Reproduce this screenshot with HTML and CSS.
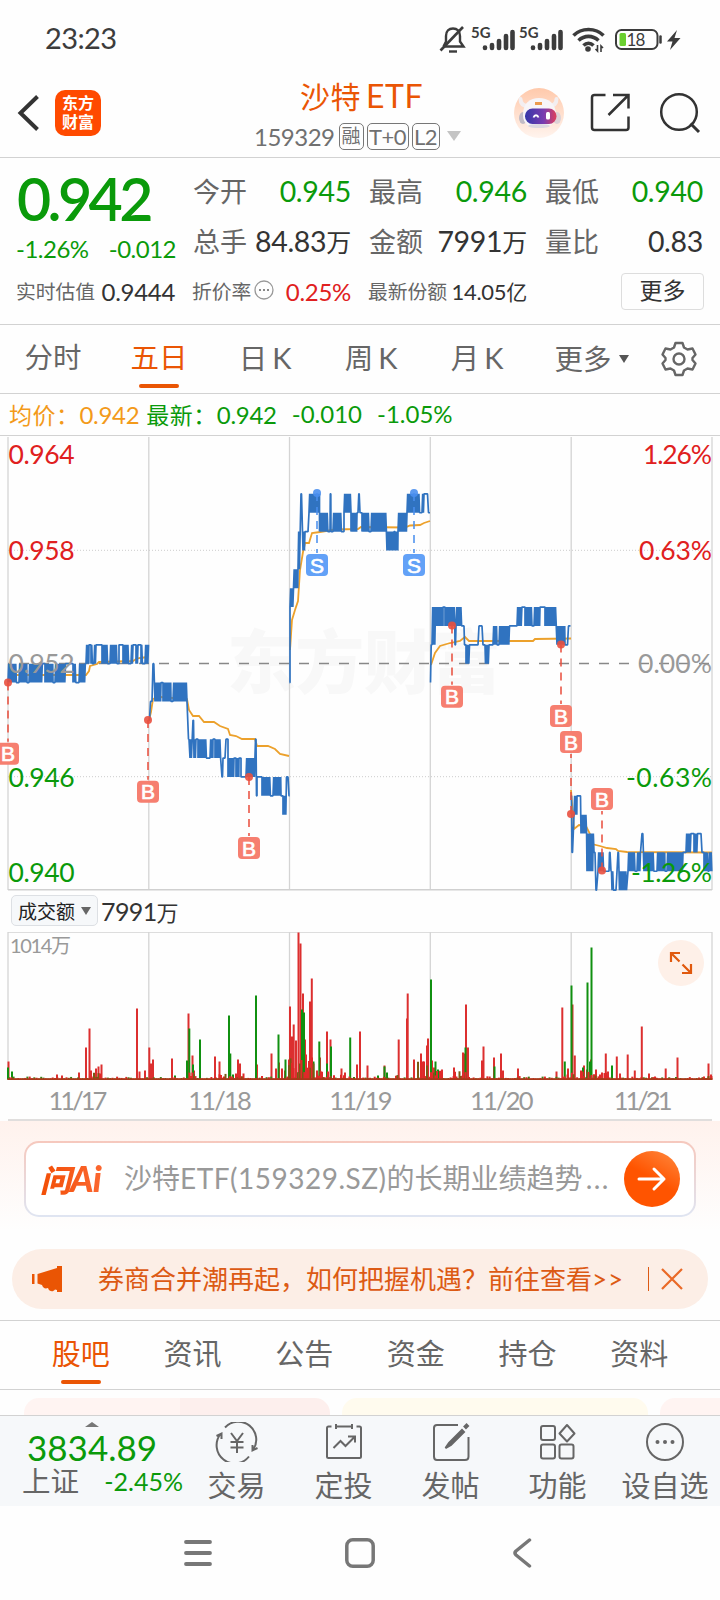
FILE: index.html
```html
<!DOCTYPE html>
<html lang="zh-CN">
  <head>
    <meta charset="UTF-8" />
    <meta name="viewport" content="width=device-width, initial-scale=1.0" />
    <title>沙特ETF 159329</title>
    <link rel="stylesheet" href="styles.css">
  </head>
  <body>
    <div class="status-bar">
      <span class="clock">23:23</span>
      <svg class="status-icons" width="244" height="32" viewBox="438 22 244 32">
        <g fill="none" stroke="#3c3c3c" stroke-width="2.4">
          <path d="M445 45.5h18.5l-3.5-5v-5.500c0-5-3-7.500-7-7.500s-7 2.500-7 7.500v5.500l-2.500 5" />
          <path d="M463 26 440.500 49.500" stroke-width="2.600" />
          <path d="M449 50.500h8" />
        </g>
        <g class="net">
          <text x="471" y="37" textLength="19.500" lengthAdjust="spacingAndGlyphs">5G</text>
          <text x="519" y="37" textLength="19.500" lengthAdjust="spacingAndGlyphs">5G</text>
        </g>
        <g stroke="#3c3c3c" stroke-width="4.600" stroke-linecap="round">
          <path d="M485 47v-.5M492 47v-3M499 47v-7M506 47v-12M512.500 47v-16" />
          <path d="M533 47v-.5M540 47v-3M547 47v-7M554 47v-12M560.500 47v-16" />
        </g>
        <g fill="none" stroke="#3c3c3c" stroke-width="3.600">
          <path d="M573.500 34.500c8-8 22-8 30 0M578.500 39.500c6-5.500 14-5.500 20 0M583.500 44.500c3-3 7-3 10 0" />
        </g>
        <circle cx="588" cy="48" r="2.800" fill="#3c3c3c" />
        <path d="M597.500 44v6l-2-2M601 51v-6l2 2" stroke="#3c3c3c" stroke-width="1.600" fill="none" />
        <rect x="616" y="29" width="41.500" height="19" rx="5.500" fill="none" stroke="#3c3c3c" stroke-width="2" />
        <rect x="619.500" y="32" width="6.500" height="13" rx="1.500" fill="#6bcf2f" />
        <text class="battery" x="626.500" y="45">18</text>
        <path d="M660.500 35.500v6" stroke="#3c3c3c" stroke-width="2.500" stroke-linecap="round" />
        <path d="M677 29 667 40.500h5.500l-2.500 8.500 10.500-12h-6z" fill="#3c3c3c" />
      </svg>
    </div>

    <div class="header">
      <svg class="back" width="24" height="38" viewBox="0 0 24 38">
        <path d="M21.500 2.500 4.500 19l17 16.500" fill="none" stroke="#333" stroke-width="4" />
      </svg>
      <div class="app-logo">东方<br>财富</div>
      <div class="title-box">
        <div class="title"><span class="title-cn">沙特</span>ETF</div>
        <div class="subtitle">
          <span class="code">159329</span>
          <span class="tag tag-cn">融</span>
          <span class="tag tag-t0">T+0</span>
          <span class="tag tag-l2">L2</span>
          <i class="caret"></i>
        </div>
      </div>
      <div class="header-icons">
        <svg class="robot" width="50" height="50" viewBox="0 0 50 50">
          <defs>
            <linearGradient id="robotBg" x1="0" y1="0" x2="0" y2="1">
              <stop offset="0" stop-color="#ffc9ab" />
              <stop offset="1" stop-color="#fff4ee" />
            </linearGradient>
            <linearGradient id="visor">
              <stop offset="0" stop-color="#3437a8" />
              <stop offset=".6" stop-color="#7a3cb0" />
              <stop offset="1" stop-color="#e0405a" />
            </linearGradient>
          </defs>
          <circle cx="25" cy="25" r="25" fill="url(#robotBg)" />
          <path d="M6.500 11c0 5 3 7 8 7M42.500 11c0 5-3 7-8 7" stroke="#f3eef0" stroke-width="4" fill="none" stroke-linecap="round" />
          <ellipse cx="9" cy="30" rx="4" ry="6" fill="#c2bcc6" />
          <ellipse cx="43" cy="30" rx="4" ry="6" fill="#ddd2d6" />
          <path d="M9 27C9 15 16 10 25 10s17 5 17 17c0 9-7 13-17 13S9 36 9 27z" fill="#f7f5f8" />
          <ellipse cx="25" cy="38" rx="11" ry="2" fill="#ddd8e0" />
          <path d="M21 15.500h7" stroke="#eb9b4f" stroke-width="3" />
          <rect x="11" y="20.500" width="31.500" height="15.500" rx="7.500" fill="url(#visor)" />
          <path d="M19.500 29.500c1-3 4-3 5 0" fill="none" stroke="#fff" stroke-width="1.800" />
          <rect x="32" y="24" width="4" height="7.500" rx="1.500" fill="#fff" />
        </svg>
        <svg width="40" height="40" viewBox="0 0 40 40" fill="none" stroke="#333" stroke-width="2.500">
          <path d="M15.500 2H4.500Q2 2 2 4.500v30Q2 37 4.500 37h31.500Q38.500 37 38.500 34.500V23.500M23 2h15.500v13.500M38 2.500 18.500 22" />
        </svg>
        <svg width="42" height="42" viewBox="0 0 42 42" fill="none" stroke="#333" stroke-width="2.500">
          <circle cx="20" cy="20" r="17.800" />
          <path d="m31.500 31.500 8.500 8.500" stroke-width="3" />
        </svg>
      </div>
    </div>

    <div class="quote">
      <div class="quote-main">
        <div class="last-price">0.942</div>
        <div class="change"><span>-1.26%</span><span>-0.012</span></div>
      </div>
      <div class="quote-grid">
        <div class="cell"><b>今开</b><span class="green">0.945</span></div>
        <div class="cell"><b>最高</b><span class="green">0.946</span></div>
        <div class="cell"><b>最低</b><span class="green">0.940</span></div>
        <div class="cell"><b>总手</b><span>84.83<em>万</em></span></div>
        <div class="cell"><b>金额</b><span>7991<em>万</em></span></div>
        <div class="cell"><b>量比</b><span>0.83</span></div>
      </div>
    </div>
    <div class="quote-extra">
      <div class="cell cell-first"><b>实时估值</b><span>0.9444</span></div>
      <div class="cell"><b class="with-dots">折价率<svg width="20" height="20" viewBox="0 0 20 20"><circle cx="10" cy="10" r="9" fill="none" stroke="#999" stroke-width="1.300" /><path d="M5 10h2M9 10h2M13 10h2" stroke="#888" stroke-width="2" /></svg></b><span class="red">0.25%</span></div>
      <div class="cell cell-share"><b>最新份额</b><span>14.05<em>亿</em></span></div>
      <div class="more-btn">更多</div>
    </div>

    <div class="period-tabs">
      <span>分时</span>
      <span class="active">五日</span>
      <span>日<i>K</i></span>
      <span>周<i>K</i></span>
      <span>月<i>K</i></span>
      <span class="tab-more">更多<u></u></span>
      <svg width="36" height="36" viewBox="0 0 36 36" fill="none" stroke="#666" stroke-width="2.400" stroke-linejoin="round">
        <path d="M14.500 2h7l1.500 4.500 3.500 2 5-1 3 6-3 3.500v2l3 3.500-3 6-5-1-3.500 2L21.500 34h-7L13 29.500l-3.500-2-5 1-3-6 3-3.500v-2l-3-3.500 3-6 5 1 3.500-2z" />
        <circle cx="18" cy="18" r="5.500" />
      </svg>
    </div>

    <div class="legend">
      <span class="avg"><b>均价：</b>0.942</span>
      <span class="latest"><b>最新：</b>0.942</span>
      <span class="diff">-0.010</span>
      <span class="pct">-1.05%</span>
    </div>

    <svg class="price-chart" id="price" width="720" height="456" viewBox="0 436 720 456"></svg>

    <div class="volume-head">
      <div class="volume-select">成交额<i></i></div>
      <span>7991<em>万</em></span>
    </div>

    <div class="volume-box">
      <svg class="volume-chart" id="volume" width="720" height="149" viewBox="0 932 720 149"></svg>
      <div class="expand">
        <svg width="24" height="24" viewBox="0 0 24 24" fill="none" stroke="#e0590e" stroke-width="2.200">
          <path d="M11 2H2v9M2 2l8.500 8.500M13 22h9v-9M22 22l-8.500-8.500" />
        </svg>
      </div>
    </div>
    <div class="dates">
      <span class="tight">11/17</span><span>11/18</span><span>11/19</span><span>11/20</span><span class="tight">11/21</span>
    </div>

    <div class="ai-section">
      <div class="ai-box">
        <span class="ai-logo">问<i>Ai</i></span>
        <span class="ai-text">沙特<i>ETF(159329.SZ)</i>的长期业绩趋势<i>...</i></span>
        <div class="ai-go">
          <svg width="30" height="26" viewBox="0 0 30 26" fill="none" stroke="#fff" stroke-width="3" stroke-linecap="round" stroke-linejoin="round">
            <path d="M2 13h25M17 3l10 10-10 10" />
          </svg>
        </div>
      </div>
    </div>

    <div class="notice">
      <svg width="31" height="26" viewBox="0 0 31 26" fill="#ea5504">
        <path d="M0 8h2.500v10H0zM5.500 8 25 2V0h5v26h-5v-2l-2-.500c-2 3-6 2-7-1.500-3 1-5 0-6-3l-4.500-1.500z" />
      </svg>
      <span class="notice-text">券商合并潮再起，如何把握机遇？前往查看<i>&gt;&gt;</i></span>
      <span class="divider"></span>
      <svg width="22" height="22" viewBox="0 0 22 22" fill="none" stroke="#ea6a28" stroke-width="2.200">
        <path d="m1 1 20 20M21 1 1 21" />
      </svg>
    </div>

    <div class="info-tabs">
      <span class="active">股吧</span>
      <span>资讯</span>
      <span>公告</span>
      <span>资金</span>
      <span>持仓</span>
      <span>资料</span>
    </div>

    <div class="cards">
      <div class="card pink"></div>
      <div class="card yellow"></div>
      <div class="card pink"></div>
    </div>

    <div class="bottom-bar">
      <div class="index">
        <i class="up"></i>
        <div class="index-value">3834.89</div>
        <div class="index-row"><b>上证</b><span>-2.45%</span></div>
      </div>
      <div class="action">
        <svg width="44" height="40" viewBox="0 0 44 40" fill="none" stroke="#666" stroke-width="2">
          <path d="M10 5.500A18 18 0 0 1 38 28M34 34.500A18 18 0 0 1 5.500 12M1.500 14l5-2.500V17M42.500 26l-5 2.500V23" />
          <path d="m16 11 6 8 6-8M22 19v12M15.500 20h13M15.500 25.500h13" />
        </svg>
        <span>交易</span>
      </div>
      <div class="action">
        <svg width="44" height="40" viewBox="0 0 44 40" fill="none" stroke="#666" stroke-width="2">
          <path d="M9.500 4.500H6.500Q5 4.500 5 6v28.500Q5 36 6.500 36h31q1.500 0 1.500-1.500V6q0-1.500-1.500-1.500H34.500M14 4.500h16M14 2v5M30 2v5" />
          <path d="m11.500 26 7-7 5 5L33 14.500M26 14.500h7v6" />
        </svg>
        <span>定投</span>
      </div>
      <div class="action">
        <svg width="44" height="40" viewBox="0 0 44 40" fill="none" stroke="#666" stroke-width="2">
          <path d="M29 3H8Q5 3 5 6v28.500Q5 38 8 38h28q3.500 0 3.500-3.500V15" />
          <path d="m16.500 26 3.500-5L33 8l2 2-13 13z" fill="#666" />
          <path d="m35.500 6 3.500-3.500" stroke-width="4" />
        </svg>
        <span>发帖</span>
      </div>
      <div class="action">
        <svg width="44" height="40" viewBox="0 0 44 40" fill="none" stroke="#666" stroke-width="2">
          <rect x="5" y="4" width="14" height="14" rx="2" />
          <rect x="5" y="22.500" width="14" height="14" rx="2" />
          <rect x="23.500" y="22.500" width="14" height="14" rx="2" />
          <path d="m31 3 7.500 8.500L31 19.500l-7.500-8z" stroke-linejoin="round" />
        </svg>
        <span>功能</span>
      </div>
      <div class="action">
        <svg width="44" height="40" viewBox="0 0 44 40">
          <circle cx="22" cy="20" r="18" fill="none" stroke="#666" stroke-width="2" />
          <g fill="#666"><circle cx="14.500" cy="20" r="2" /><circle cx="22" cy="20" r="2" /><circle cx="29.500" cy="20" r="2" /></g>
        </svg>
        <span>设自选</span>
      </div>
    </div>

    <div class="nav-bar">
      <svg width="28" height="28" viewBox="0 0 28 28" stroke="#777" stroke-width="3.800" stroke-linecap="round">
        <path d="M2 3h24M2 14h24M2 25h24" />
      </svg>
      <svg class="home" width="30" height="30" viewBox="0 0 30 30" fill="none" stroke="#777" stroke-width="3.500">
        <rect x="1.800" y="1.800" width="26.400" height="26.400" rx="6" />
      </svg>
      <svg width="20" height="30" viewBox="0 0 20 30" fill="none" stroke="#777" stroke-width="3.500" stroke-linecap="round" stroke-linejoin="round">
        <path d="M17.500 2 4 13q-2 2 0 4l13.500 11" />
      </svg>
    </div>

    <script src="script.js"></script>
  </body>
</html>
```
FILE: styles.css
```css
* {
  margin: 0;
  padding: 0;
  box-sizing: border-box;
}

body {
  width: 720px;
  height: 1600px;
  overflow: hidden;
  background-color: #fefefe;
  color: #333;
  font-family: Lato, "Noto Sans CJK SC", sans-serif;
  display: flex;
  flex-direction: column;
}

b, em, i, u {
  font-weight: inherit;
  font-style: normal;
  text-decoration: none;
}

svg {
  display: block;
  flex: none;
}

.green { color: #0a9a0a; }
.cell .red { color: #e02020; }

/* status bar */
.status-bar {
  height: 72px;
  padding: 6px 38px 0 45px;
  display: flex;
  justify-content: space-between;
  align-items: center;
}

.clock {
  font-size: 29px;
  line-height: 30px;
  padding-bottom: 3px;
  letter-spacing: -0.6px;
  color: #3c3c3c;
}

.net text {
  font: bold 15px Lato, sans-serif;
  fill: #3c3c3c;
}

.battery {
  font: 17px Lato, sans-serif;
  letter-spacing: -0.8px;
  fill: #3c3c3c;
}

/* header */
.header {
  height: 86px;
  padding: 0 19px 0 16px;
  display: flex;
  align-items: center;
  border-bottom: 1px solid #d2d2d2;
}

.back {
  margin-top: -4px;
}

.app-logo {
  width: 46px;
  height: 46px;
  margin: -3px 0 0 15px;
  border-radius: 10px;
  background-color: #ff4a00;
  color: #fff;
  font-size: 16px;
  font-weight: 700;
  line-height: 19px;
  padding-top: 3px;
  text-align: center;
}

.title-box {
  width: 220px;
  margin-left: 151px;
}

.title {
  height: 43px;
  line-height: 40px;
  padding-left: 48px;
  font-size: 32px;
  letter-spacing: 0.5px;
  color: #ea5504;
}

.title-cn {
  font-size: 30px;
  margin-right: 5px;
}

.subtitle {
  display: flex;
  align-items: center;
  height: 34px;
  gap: 3px;
  padding-left: 2px;
  font-size: 24px;
  color: #707070;
}

.code {
  letter-spacing: -0.5px;
  margin-right: 1px;
}

.tag {
  height: 27px;
  line-height: 26px;
  border: 1px solid #777;
  border-radius: 5px;
  font-size: 22px;
  text-align: center;
  letter-spacing: -0.5px;
}

.tag-cn { width: 25px; font-size: 19px; line-height: 24px; letter-spacing: 0; }
.tag-t0 { width: 42px; }
.tag-l2 { width: 28px; }

.caret {
  margin-left: 4px;
  border: 7px solid transparent;
  border-top: 10px solid #c4c4c4;
  border-bottom: 0;
}

.header-icons {
  display: flex;
  align-items: center;
  gap: 27px;
  margin: -3px 0 0 auto;
}

.header-icons svg:first-child {
  margin-right: -1px;
}

.header-icons svg:last-child {
  margin-left: 2px;
}

/* quote */
.quote {
  display: flex;
  height: 110px;
  padding: 0 17px 0 17px;
}

.quote-main {
  width: 159px;
  color: #0a9a0a;
}

.last-price {
  height: 75px;
  line-height: 82px;
  font-size: 59px;
  font-weight: 600;
  letter-spacing: -3.6px;
}

.change {
  display: flex;
  justify-content: space-between;
  font-size: 24px;
  line-height: 32px;
  letter-spacing: -0.5px;
}

.change span:first-child {
  margin-left: -1px;
}

.quote-grid {
  display: grid;
  grid-template-columns: repeat(3, 158px);
  grid-auto-rows: 50px;
  column-gap: 18px;
  padding-top: 8px;
  margin-left: 17px;
}

.cell {
  display: flex;
  justify-content: space-between;
  align-items: center;
  white-space: nowrap;
  font-size: 28.500px;
  letter-spacing: -0.3px;
}

.cell b {
  color: #666;
  font-size: 27px;
  letter-spacing: 0;
  margin-top: -2px;
}

.cell em {
  font-size: 25px;
}

.quote-extra {
  display: flex;
  align-items: center;
  height: 56px;
  padding: 0 16px 10px 16px;
}

.quote-extra .cell {
  width: 159px;
  margin-right: 17px;
  font-size: 24px;
}

.quote-extra .cell-share {
  font-size: 22px;
}

.quote-extra b {
  font-size: 19.800px;
}

.quote-extra em {
  font-size: 21px;
}

.with-dots {
  display: flex;
  align-items: center;
  gap: 3px;
}

.more-btn {
  width: 83px;
  height: 37px;
  line-height: 32px;
  margin-left: auto;
  border: 1px solid #ddd;
  border-radius: 4px;
  font-size: 23px;
  text-align: center;
}

/* period tabs */
.period-tabs {
  display: flex;
  align-items: center;
  height: 70px;
  border-top: 1px solid #d2d2d2;
  border-bottom: 1px solid #d2d2d2;
  font-size: 28.500px;
  color: #666;
}

.period-tabs span {
  width: 106px;
  height: 68px;
  line-height: 65px;
  text-align: center;
}

.period-tabs i {
  font-size: 29px;
  margin-left: 5px;
}

.period-tabs .tab-more {
  width: 131px;
  padding-right: 8px;
  display: flex;
  align-items: center;
  justify-content: center;
  gap: 7px;
}

.tab-more u {
  border: 5px solid transparent;
  border-top: 8px solid #555;
  border-bottom: 0;
}

.period-tabs .active,
.info-tabs .active {
  color: #ea5504;
  position: relative;
}

.active::after {
  content: "";
  position: absolute;
  left: 50%;
  bottom: 5px;
  width: 40px;
  height: 4px;
  margin-left: -20px;
  border-radius: 2px;
  background-color: #ea5504;
}

.legend {
  display: flex;
  align-items: center;
  height: 42px;
  padding: 0 0 2px 9px;
  border-bottom: 1px solid #d2d2d2;
  font-size: 24px;
  color: #0a9a0a;
}

.legend b {
  font-size: 23px;
  letter-spacing: 0.5px;
}

.avg { color: #f39a1a; margin-right: 7px; }
.avg, .latest { letter-spacing: -0.3px; }
.latest, .diff { margin-right: 15px; }

/* charts */
.label {
  font: 26.500px Lato, sans-serif;
}

.mark {
  font: 21px "Liberation Sans", sans-serif;
  fill: #fff;
  stroke: #fff;
  stroke-width: 0.7px;
}

.watermark {
  font: 900 69px "Noto Sans CJK SC", sans-serif;
  fill: #f8f8f8;
}

.volume-head {
  display: flex;
  align-items: center;
  height: 40px;
  padding: 0 0 3px 11px;
  gap: 3px;
  font-size: 25px;
  letter-spacing: -0.6px;
}

.volume-head em {
  font-size: 22px;
}

.volume-select {
  display: flex;
  align-items: center;
  justify-content: center;
  width: 87px;
  height: 31px;
  gap: 6px;
  border: 1px solid #dde0e4;
  border-radius: 5px;
  background-color: #f6f8fa;
  font-size: 19px;
  letter-spacing: 0;
  color: #222;
}

.volume-select i {
  border: 5px solid transparent;
  border-top: 8px solid #666;
  border-bottom: 0;
}

.volume-box {
  position: relative;
  height: 149px;
}

.volume-text {
  font: 20px Lato, "Noto Sans CJK SC", sans-serif;
  fill: #999;
}

.expand {
  position: absolute;
  top: 8px;
  right: 16px;
  width: 46px;
  height: 46px;
  border-radius: 50%;
  background-color: #fef0e8;
  display: flex;
  align-items: center;
  justify-content: center;
}

.dates {
  display: flex;
  height: 40px;
  margin: 0 8px;
  border-bottom: 2px solid #e0dedd;
  font-size: 25.500px;
  line-height: 38px;
  color: #999;
}

.dates span {
  width: 141px;
  text-align: center;
  letter-spacing: -1.8px;
}

.dates .tight {
  letter-spacing: -3px;
}

.dates span:first-child {
  padding-right: 4px;
}

/* ai search */
.ai-section {
  height: 128px;
  padding: 20px 24px 0;
  background: linear-gradient(#fff2ed, #fefefe 110px);
}

.ai-box {
  display: flex;
  align-items: center;
  height: 76px;
  padding: 0 14px;
  border: 2px solid transparent;
  border-radius: 15px;
  background: linear-gradient(#fff, #fff) padding-box, linear-gradient(#f6c8bd, #dfe5f2) border-box;
}

.ai-logo {
  width: 84px;
  font-size: 31px;
  line-height: 40px;
  font-weight: 900;
  font-style: italic;
  letter-spacing: -1px;
  background: linear-gradient(90deg, #f24e05, #ff7040);
  -webkit-background-clip: text;
  color: transparent;
}

.ai-logo i {
  font-size: 36px;
  font-style: italic;
}

.ai-text {
  flex: 1;
  font-size: 28px;
  line-height: 40px;
  padding-bottom: 2px;
  color: #999;
  white-space: nowrap;
}

.ai-text i {
  letter-spacing: 0.5px;
}

.ai-text i:last-child {
  margin-left: 3px;
  letter-spacing: 1.500px;
}

.ai-go {
  width: 56px;
  height: 56px;
  border-radius: 50%;
  background: linear-gradient(30deg, #ff5400 50%, #ff8a40);
  display: flex;
  align-items: center;
  justify-content: center;
}

.notice {
  display: flex;
  align-items: center;
  height: 60px;
  margin: 0 12px;
  padding: 0 25px 0 20px;
  border-radius: 30px;
  background-color: #fceee6;
  color: #dc5a14;
}

.notice-text {
  flex: 1;
  margin-left: 35px;
  padding-bottom: 3px;
  font-size: 26px;
  white-space: nowrap;
}

.notice-text i {
  letter-spacing: 1px;
}

.divider {
  width: 1px;
  height: 24px;
  margin-right: 12px;
  background-color: #dc5a14;
}

.info-tabs {
  display: flex;
  height: 70px;
  margin-top: 11px;
  padding: 0 25px;
  border-top: 1px solid #d2d2d2;
  border-bottom: 1px solid #d2d2d2;
  font-size: 29px;
  line-height: 66px;
  color: #666;
}

.info-tabs span {
  flex: 1;
  text-align: center;
}

.cards {
  display: flex;
  gap: 12px;
  height: 25px;
  padding: 8px 0 0 24px;
  overflow: hidden;
}

.card {
  flex: none;
  width: 306px;
  height: 60px;
  border-radius: 15px;
}

.pink { background: linear-gradient(90deg, #fff4f2 51%, #fdefed 51%); }
.yellow { background-color: #fffbee; }

/* bottom bar */
.bottom-bar {
  display: flex;
  height: 91px;
  border-top: 1px solid #d2d2d2;
  background-color: #f6f8fa;
  color: #666;
}

.index {
  width: 183px;
  padding: 6px 0 0 22px;
}

.up {
  display: block;
  width: 0;
  margin-left: 63px;
  border: 7px solid transparent;
  border-bottom: 5px solid #777;
  border-top: 0;
}

.index-value {
  padding-left: 5px;
  font-size: 35px;
  line-height: 40px;
  color: #0a9a0a;
}

.index-row {
  display: flex;
  justify-content: space-between;
  line-height: 28px;
}

.index-row b {
  font-size: 28.500px;
}

.index-row span {
  color: #0a9a0a;
  font-size: 25px;
}

.action {
  width: 107px;
  padding-top: 6px;
  display: flex;
  flex-direction: column;
  align-items: center;
}

.action span {
  margin-top: 5px;
  font-size: 29px;
  line-height: 38px;
  white-space: nowrap;
}

.action:last-child {
  padding-left: 1px;
}

.nav-bar {
  flex: 1;
  display: flex;
  justify-content: space-between;
  align-items: center;
  padding: 0 188px 0 184px;
}

.home {
  margin-right: 4px;
}
```
FILE: script.js
```js
const NS = 'http://www.w3.org/2000/svg';
const price = document.querySelector('#price');
const volume = document.querySelector('#volume');

const add = (parent, tag, attrs, text) => {
  const el = document.createElementNS(NS, tag);
  for (const key in attrs) el.setAttribute(key, attrs[key]);
  if (text) el.textContent = text;
  parent.appendChild(el);
  return el;
}

// one level = 0.001, level 0 = 0.952
const levelY = (level) => 663.7 - level * 18.87;
const dayX = [8, 148.8, 289.5, 430.3, 571.2, 712];

// [from x, to x, level, level], two different levels = price flips between them
const days = [
  [[8,17,-1,0],[17,19,-1,-1],[19,27,-1,0],[27,29,-1,-1],[29,43,-1,0],[43,45,0,0],[45,53,-1,0],[53,55,-1,-1],[55,66,-1,0],[66,73,0,0],[73,76,-1,0],[76,79,-1,-1],[79,86,-1,0],
   [86,89,0,1],[89,91,1,1],[91,93,0,1],[94,96,0,1],[96,102,1,1],[102,108,0,1],[108,110,0,0],[110,117,0,1],[117,119,0,0],[119,123,1,1],[123,129,0,1],[129,131,0,0],[131,133,0,1],[133,136,1,1],[136,138,0,1],[138,141,1,1],[141,143,0,1],[143,145,0,0],[145,148.5,0,1]],
  [[149,149.5,-3,-3],[150.5,152,-2,-2],[153,153.8,0,0],[155,161,-2,-1],[161,163,-1,-1],[163,171,-2,-1],[171,172.5,-2,-2],[173,187.500,-2,-1],[188.500,189,-4,-4],[190,192,-5,-4],[193,193.5,-3,-3],[194,196,-5,-4],[196,198,-4,-4],[198,207,-5,-4],[207,210,-5,-5],[210,213,-5,-4],[213,215,-4,-4],[215,221,-5,-4],[222,222.5,-6,-6],[223,225,-5,-5],[226,228,-4,-4],[228,234,-6,-5],[234,236,-5,-5],[236,239,-6,-5],[239,241,-5,-5],[241,246,-6,-6],[246,255,-6,-5],[255.5,256,-4,-4],[256.5,257,-7,-7],[257,262,-6,-6],[262,271,-7,-6],[271,272,-7,-7],[273,281,-7,-6],[281,283,-7,-7],[283,286,-8,-7],[286.5,288,-6,-6],[289,289.5,-7,-7]],
  [[289.5,290,-1,-1],[290,293.5,3,4],[293.5,298,4,5],[298,299.5,5,7],[301,301.5,9,9],[303,304.500,6,7],[305,308,7,7],[309,319.500,8,9],[319.5,328,7,8],[328,330,7,7],[330.3,330.8,9,9],[331,333,7,7],[333,342,7,8],[342,344,7,7],[344,351,8,9],[351,357,7,8],[357,358,8,8],[358.8,359.2,9,9],[360,362,8,8],[362,369,7,8],[369,371,7,7],[371,387,7,8],[387,394,6,7],[394,395,7,7],[395,398,6,7],[398,406.500,7,8],[407,420,8,9],[420,422,8,8],[422,424,8,9],[424,427.500,9,9],[428.500,430,8,8]],
  [[430.5,431.5,-1,1],[432,436,1,3],[436,443,2,3],[443,445,3,3],[445,455,2,3],[455,455.5,1,1],[456,462,2,3],[463,464,2,2],[464.5,466,1,1],[466,470,0,1],[470,478,1,1],[479,482,2,2],[483,485,1,1],[485.5,489,0,1],[490,492,1,1],[493,497,1,2],[497,499,1,1],[499,510,1,2],[510,517,2,2],[517,522,2,3],[522,525,3,3],[525,532,2,3],[532,534,2,2],[534,540,2,3],[540,545,3,3],[545,556,2,3],[557,565,1,2],[565,567.500,1,1],[568.5,570.5,2,2]],
  [[571,571.5,-7,-7],[572,572.500,-10,-10],[574,577,-8,-7],[577,580.500,-7,-7],[581,587,-9,-8],[587,594,-11,-9],[594,595,-10,-10],[596,596.500,-12,-12],[598,604,-11,-10],[605,609,-11,-11],[609.5,610,-10,-10],[611,611.5,-11,-11],[612,614,-12,-11],[615,616,-12,-12],[618,618.5,-10,-10],[619.5,627,-12,-11],[628,635,-11,-10],[635,637,-11,-11],[637,641,-11,-10],[642,642.800,-9,-9],[644,654,-11,-10],[654,657,-11,-11],[657,665,-11,-10],[665,667,-11,-11],[667,683,-11,-10],[683,685,-10,-10],[686,691,-10,-9],[691,694,-9,-9],[694,698,-10,-9],[698,701,-9,-9],[702,704,-10,-10],[704,708,-11,-10],[708,709,-11,-11],[709,712,-11,-10]]
];

const average = [
  '8,675 86,675 89,671 90,666 97,664 99,662 133,661 136,659 140,658 148,657',
  '149,720 151,712 153,699 160,697 187,699 189,710 193,716 199,716 204,722 214,722 220,726 228,729 230,735 236,736 242,739 255,739 257,746 268,746 275,749 280,754 289,756',
  '290,650 292,620 295,610 298,601 300,570 303,552 305,543 309,543 312,533 320,532 335,529.500 358,529 361,527 405,527.500 410,525.500 420,525 424,523 430,521',
  '431,665 435,653 440,646 450,643 460,641 465,637 469,641 533,641 535,639 571,638.500',
  '571,790 574,829 579,825 586,826 590,834 592,844 600,846 607,848 616,849 618,851 627,852 712,852.500'
];

// x, y of the dot, y of the letter box
const marks = [
  ['B', 8, 682.5, 753.700], ['B', 148, 720, 791.700], ['B', 249, 777, 848],
  ['S', 317, 493, 565], ['S', 414, 493, 565],
  ['B', 452, 625.5, 696.700], ['B', 561, 644.5, 716], ['B', 571, 814, 742], ['B', 602, 870.5, 799]
];

const labels = [
  ['0.964', 455, '#e02020'], ['0.958', 551, '#e02020'], ['0.952', 664, '#999'], ['0.946', 777.500, '#0a9a0a'], ['0.940', 873, '#0a9a0a']
];
const percents = [
  ['1.26%', 455, '#e02020', 69], ['0.63%', 551, '#e02020', 73], ['0.00%', 664, '#999', 74], ['-0.63%', 777.500, '#0a9a0a', 86], ['-1.26%', 873, '#0a9a0a', 81]
];

const drawPrice = () => {
  add(price, 'text', {x: 227, y: 688, class: 'watermark', textLength: 274}, '东方财富');
  dayX.forEach((x) => add(price, 'path', {d: `M${x} 437V890`, stroke: '#d4d4d4', 'stroke-width': 1.3}));
  add(price, 'path', {d: 'M8 889.800H712', stroke: '#d0d0d0', 'stroke-width': 1.6});
  [550.3, 776.7].forEach((y) => add(price, 'path', {d: `M8 ${y}H712`, stroke: '#ccc', 'stroke-dasharray': '1 2'}));
  add(price, 'path', {d: 'M8 663.500H712', stroke: '#888', 'stroke-width': 1.6, 'stroke-dasharray': '10 10', 'stroke-dashoffset': 9});

  average.forEach((points) => add(price, 'polyline', {points, fill: 'none', stroke: '#eca12c', 'stroke-width': 1.8}));

  days.forEach((day) => {
    const points = [];
    day.forEach(([from, to, a, b]) => {
      if (a === b) {
        points.push([from, levelY(a)], [to, levelY(a)]);
      } else {
        let low = true;
        for (let x = from; x <= to; x += 0.7) {
          points.push([x, levelY(low ? a : b)]);
          low = !low;
        }
      }
    });
    add(price, 'polyline', {points: points.join(' '), fill: 'none', stroke: '#3073c0', 'stroke-width': 1.7, 'stroke-linejoin': 'bevel'});
  });

  marks.forEach(([letter, x, dotY, boxY]) => {
    const color = letter === 'B' ? '#e9503f' : '#4a8fee';
    const end = boxY > dotY ? boxY - 12 : boxY + 12;
    add(price, 'path', {d: `M${x} ${dotY}V${end}`, stroke: color, 'stroke-width': 1.8, 'stroke-dasharray': '8 6', opacity: 0.85});
    add(price, 'circle', {cx: x, cy: dotY, r: 4, fill: color, opacity: 0.9});
    add(price, 'rect', {x: x - 11, y: boxY - 11, width: 22, height: 22, rx: 4, fill: letter === 'B' ? '#f67f70' : '#62a1f7'});
    add(price, 'text', {x, y: boxY + 7.5, 'text-anchor': 'middle', class: 'mark'}, letter);
  });

  labels.forEach(([text, y, fill]) => add(price, 'text', {x: 8.5, y: y + 9, fill, class: 'label', textLength: 66}, text));
  percents.forEach(([text, y, fill, width]) => add(price, 'text', {x: 712 - width, y: y + 9, fill, class: 'label', textLength: width}, text));
}

const red = [
  [8.5,18],[79,7],[86,32],[89.5,51],[91,9],[94,5],[96,11],[98.500,13],[101.5,15],[137,71],[139.5,8],[145,9],[149.3,32],[151,16],[153,20],[57,5],[62,4],
  [172,21],[188.500,66],[192.500,24],[194,9],[215,23],[219.5,18],[238,20],[240,16],[256,22],[257,15],[271.5,26],[276,11],[279,17],[282,11],[285,9],[289,20],
  [290,73],[292,43],[293.700,55],[296,39],[298.500,147],[300.500,136],[303,86],[305,40],[306,25],[310,78],[311.800,101],[317,9],[320,22],[327,48],[330.500,40],[341.5,11],[345,7],[357,15],[360,48],
  [367.5,14],[384.5,14],[398.7,40],[407,61],[407.700,86],[414,20],[421,26],[423,18],[427,34],[428,41],[432,19],[434,12],[442,10],[454,12],[463,27],[464.5,26],[466,75],[468,32],[482,19],[483.500,33],[494,22],[501,26],[503,9],[518,11],
  [556.5,8],[562.300,72],[568,11],[572.500,75],[574.800,24],[584,14],[587,10],[591,20],[596,10],[602,7],[605.800,26],[608,8],[616.800,23],[620,6],[627.700,25],[634.800,9],[641.800,53],[649,6],[665.700,11],[677.500,22],[708.5,16],[711,5]
];
const green = [
  [8,12],[12,8],[187,19],[189.3,51],[200,40],[175,4],[193,15],[229,64],[230.300,26],[233,5],[256,84],[278.5,45],[285.5,20],[304,67],[313.500,18],[302,70],[319.300,38],[331,33],[350.2,42],[327,16],
  [384.500,13],[387,7],[378,4],[431,100],[435.500,18],[438,10],[465.5,32],[494.5,13],[564.800,18],[571.5,94],[587.500,97],[591.500,132],[590,18],[612,14],[583,12]
];

// small bars around busy minutes
const clusters = [[94,102,8],[215,226,6],[236,245,7],[188,196,7],[289,300,22],[300,315,22],[316,335,9],[341,346,5],[396,400,5],[418,431,20],[431,443,10],[452,470,10],[563,574,8],[581,593,12],[594,610,8],[652,657,3],[668,674,3],[701,712,4]];

const drawVolume = () => {
  add(volume, 'path', {d: 'M8 932.500H712', stroke: '#ddd'});
  dayX.forEach((x) => add(volume, 'path', {d: `M${x} 932V1079`, stroke: '#d4d4d4', 'stroke-width': 1.3}));
  const bar = (x, h, stroke) => add(volume, 'path', {d: `M${x} 1079.500v-${h}`, stroke, 'stroke-width': 2});

  red.forEach(([x, h]) => bar(x, h, '#dc2f2f'));
  green.forEach(([x, h]) => bar(x, h, '#109010'));
  let n = 7;
  const next = () => {
    n = (n * 73 + 41) % 1009;
    return n / 1009;
  }
  for (let x = 9; x < 712; x += 2.3) {
    bar(x, 1 + next() * next() * 2.5, next() > 0.4 ? '#e02828' : '#3f7d14');
  }
  clusters.forEach(([from, to, height]) => {
    for (let x = from; x < to; x += 1.5) {
      bar(x, next() * height, next() > 0.3 ? '#e02828' : '#7a5a14');
    }
  });
  add(volume, 'path', {d: 'M7.500 1079.200H712.500', stroke: '#a8381a', 'stroke-width': 1.8});
  add(volume, 'text', {x: 10, y: 952.5, class: 'volume-text', textLength: 61}, '1014万');
}

drawPrice();
drawVolume();
```
